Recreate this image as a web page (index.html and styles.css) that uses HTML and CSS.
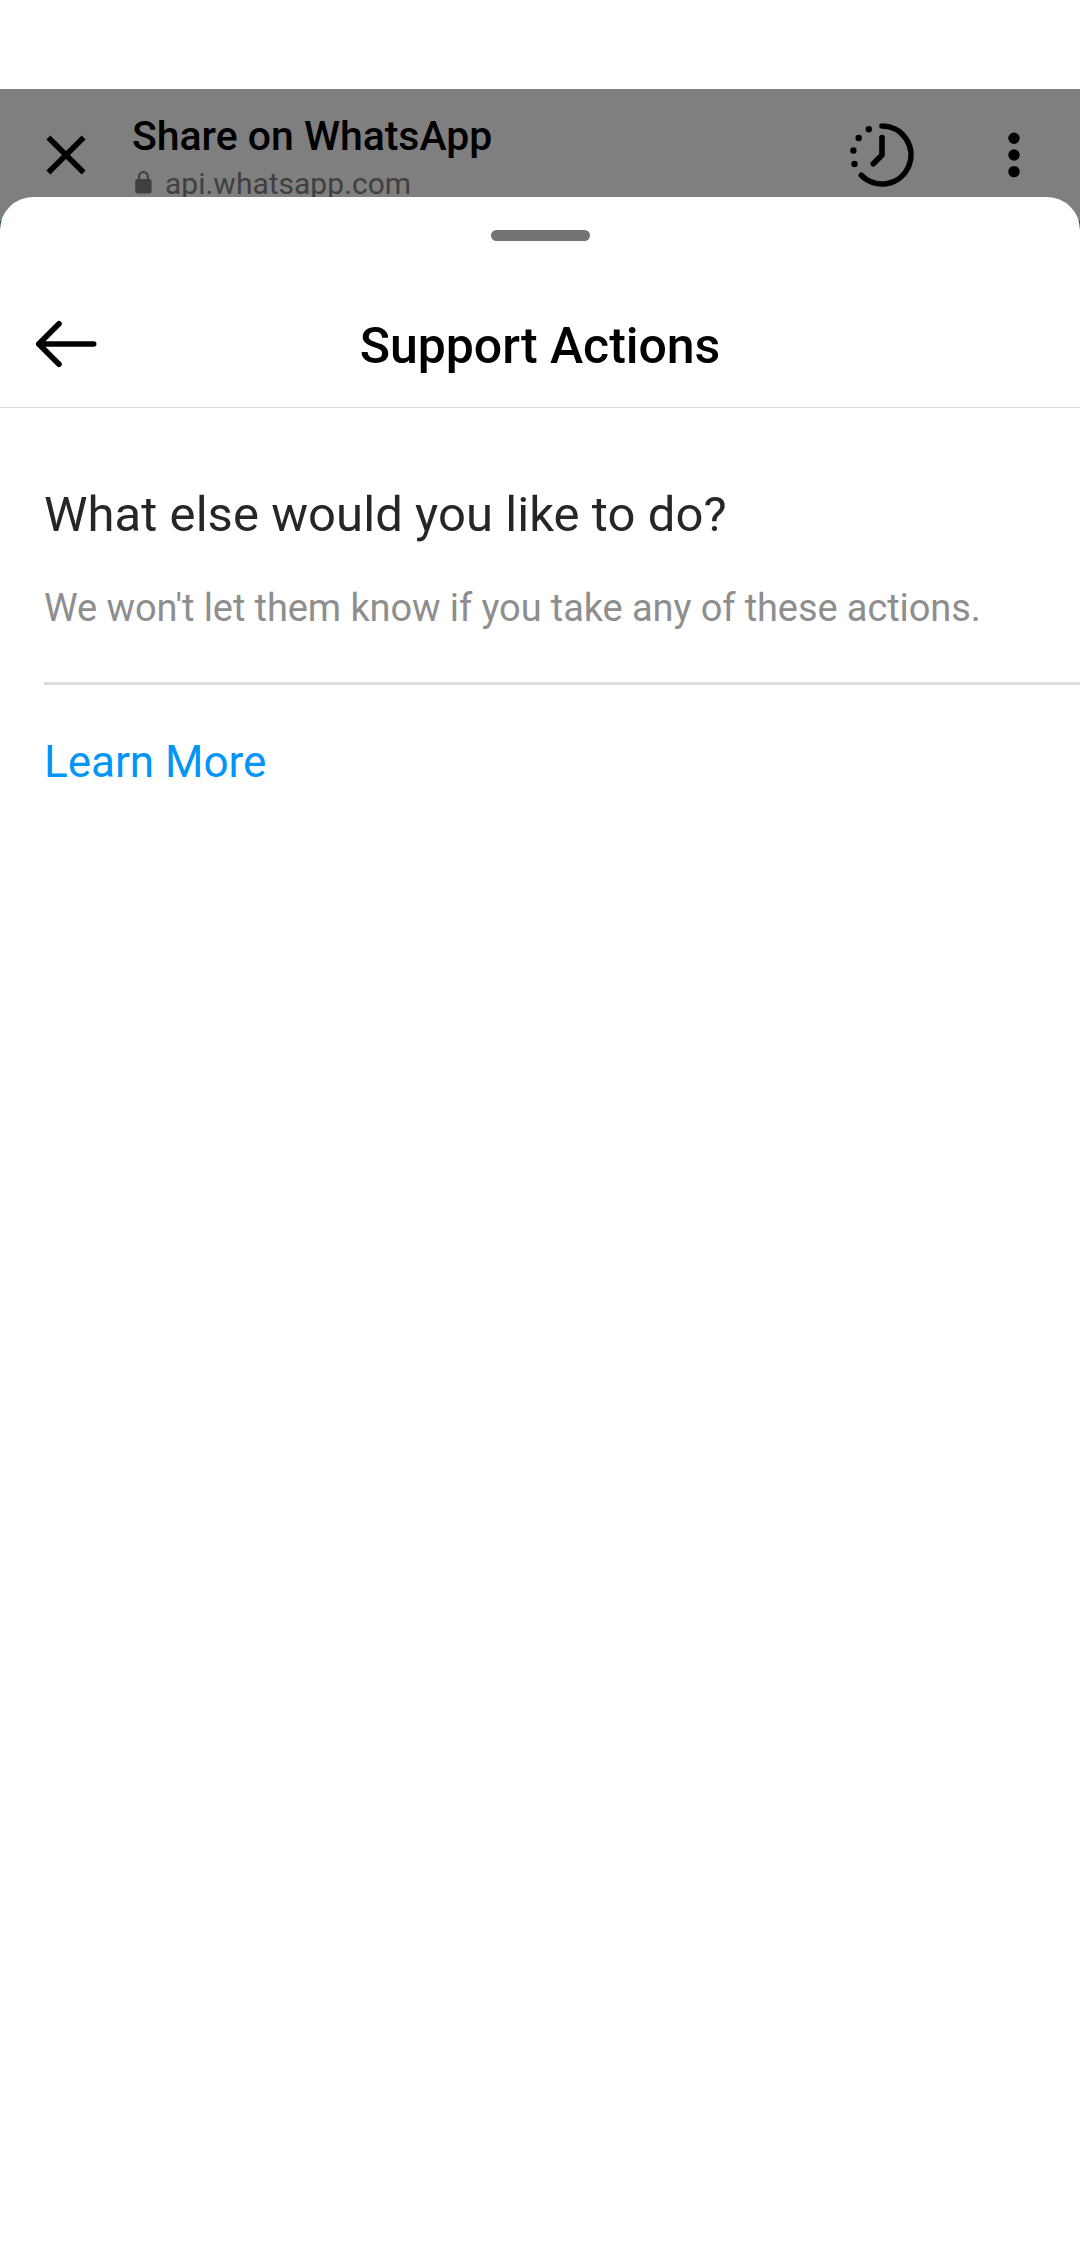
FILE: index.html
```html
<!DOCTYPE html>
<html lang="en">
<head>
<meta charset="utf-8">
<meta name="viewport" content="width=device-width">
<title>Support Actions</title>
<link rel="stylesheet" href="styles.css">
</head>
<body>
<div class="screen">
  <header class="browser-bar">
    <svg class="icon-close" viewBox="0 0 40 40"><path d="M2.4 2.4 37.6 37.6M37.6 2.4 2.4 37.6"/></svg>
    <div class="page-info">
      <div class="page-title">Share on WhatsApp</div>
      <div class="page-host">
        <svg class="icon-lock" viewBox="0 0 17 23"><rect x=".2" y="8" width="16.4" height="14.4" rx="2.5"/><path d="M4 9V5.6a4.4 4.4 0 0 1 8.8 0V9"/></svg>
        <span>api.whatsapp.com</span>
      </div>
    </div>
    <svg class="icon-clock" viewBox="0 0 66 66">
      <path d="M32 4a29 29 0 1 1-20.7 49.3M32 15.5V33l-8.7 8.8"/>
      <g><circle cx="18.8" cy="7.2" r="3.2"/><circle cx="8.7" cy="16" r="3.2"/><circle cx="3.4" cy="28.5" r="3.2"/><circle cx="4.5" cy="41.9" r="3.2"/></g>
    </svg>
    <svg class="icon-more" viewBox="0 0 12 46"><circle cx="6" cy="6.3" r="5.7"/><circle cx="6" cy="23" r="5.7"/><circle cx="6" cy="39.6" r="5.7"/></svg>
  </header>
  <main class="sheet">
    <div class="handle"></div>
    <div class="sheet-header">
      <svg class="icon-back" viewBox="0 0 62 48"><path d="M58.7 24H3.8M24 3.7 3.8 24 24 44.3"/></svg>
      <h1 class="sheet-title">Support Actions</h1>
    </div>
    <section class="content">
      <h2 class="question">What else would you like to do?</h2>
      <p class="note">We won't let them know if you take any of these actions.</p>
      <div class="divider"></div>
      <a class="learn-more">Learn More</a>
    </section>
  </main>
</div>
</body>
</html>
```
FILE: styles.css
```css
* { box-sizing: border-box; }
body { margin: 0; background: #fff; font-family: Roboto, sans-serif; }
svg { display: block; flex: none; overflow: visible; }
h1, h2, p { margin: 0; font-weight: 400; }

.screen {
  display: flex;
  flex-direction: column;
  height: 2246px;
  padding-top: 89px;
  overflow: hidden;
}

.browser-bar {
  display: flex;
  align-items: flex-start;
  flex: none;
  height: 132px;
  padding: 0 60px 0 46px;
  background: #7f7f7f;
  box-shadow: 0 20px 0 #09453d;
}
.icon-close { width: 40px; height: 40px; margin-top: 46px; fill: none; stroke: #000; stroke-width: 5.6; }
.page-info { flex: 1; margin: 23px 0 0 46px; white-space: nowrap; }
.page-title { font-size: 41px; line-height: 48px; font-weight: 500; letter-spacing: -0.04px; color: #000; }
.page-host {
  display: flex;
  align-items: flex-start;
  gap: 13px;
  margin-top: 4px;
  padding-left: 3px;
  font-size: 30px;
  line-height: 40px;
  color: #404040;
}
.icon-lock { width: 17px; height: 23px; margin-top: 6.5px; fill: #404040; }
.icon-lock path { fill: none; stroke: #404040; stroke-width: 2.2; }
.icon-clock { width: 66px; height: 66px; margin: 33px 92px 0 0; fill: none; stroke: #000; stroke-width: 5.6; stroke-linecap: round; stroke-linejoin: round; }
.icon-clock g { fill: #000; stroke: none; }
.icon-more { width: 12px; height: 46px; margin-top: 43px; }

.sheet {
  flex: 1;
  position: relative;
  margin-top: -24px;
  padding-top: 33px;
  border-radius: 33px 33px 0 0;
  background: #fff;
}
.handle { width: 99px; height: 11px; margin: 0 auto; border-radius: 6px; background: #737373; }
.sheet-header {
  display: grid;
  grid-template-columns: 62px 1fr 62px;
  align-items: start;
  height: 167px;
  padding: 79px 35px 0;
  border-bottom: 1px solid #dbdbdb;
}
.icon-back { width: 62px; height: 48px; fill: none; stroke: #000; stroke-width: 5.6; stroke-linecap: round; stroke-linejoin: round; }
.sheet-title { margin-top: -3px; font-size: 50px; line-height: 58px; font-weight: 500; letter-spacing: -0.05px; text-align: center; color: #000; }

.content { padding: 78px 0 0 44px; white-space: nowrap; }
.question { font-size: 49px; line-height: 58px; letter-spacing: 0.06px; color: #262626; }
.note { margin-top: 42px; font-size: 38px; line-height: 44px; letter-spacing: -0.09px; color: #8e8e8e; }
.divider { height: 3px; margin-top: 52px; background: #dbdbdb; }
.learn-more { display: block; margin-top: 51px; font-size: 44px; line-height: 52px; color: #0095f6; }
```
